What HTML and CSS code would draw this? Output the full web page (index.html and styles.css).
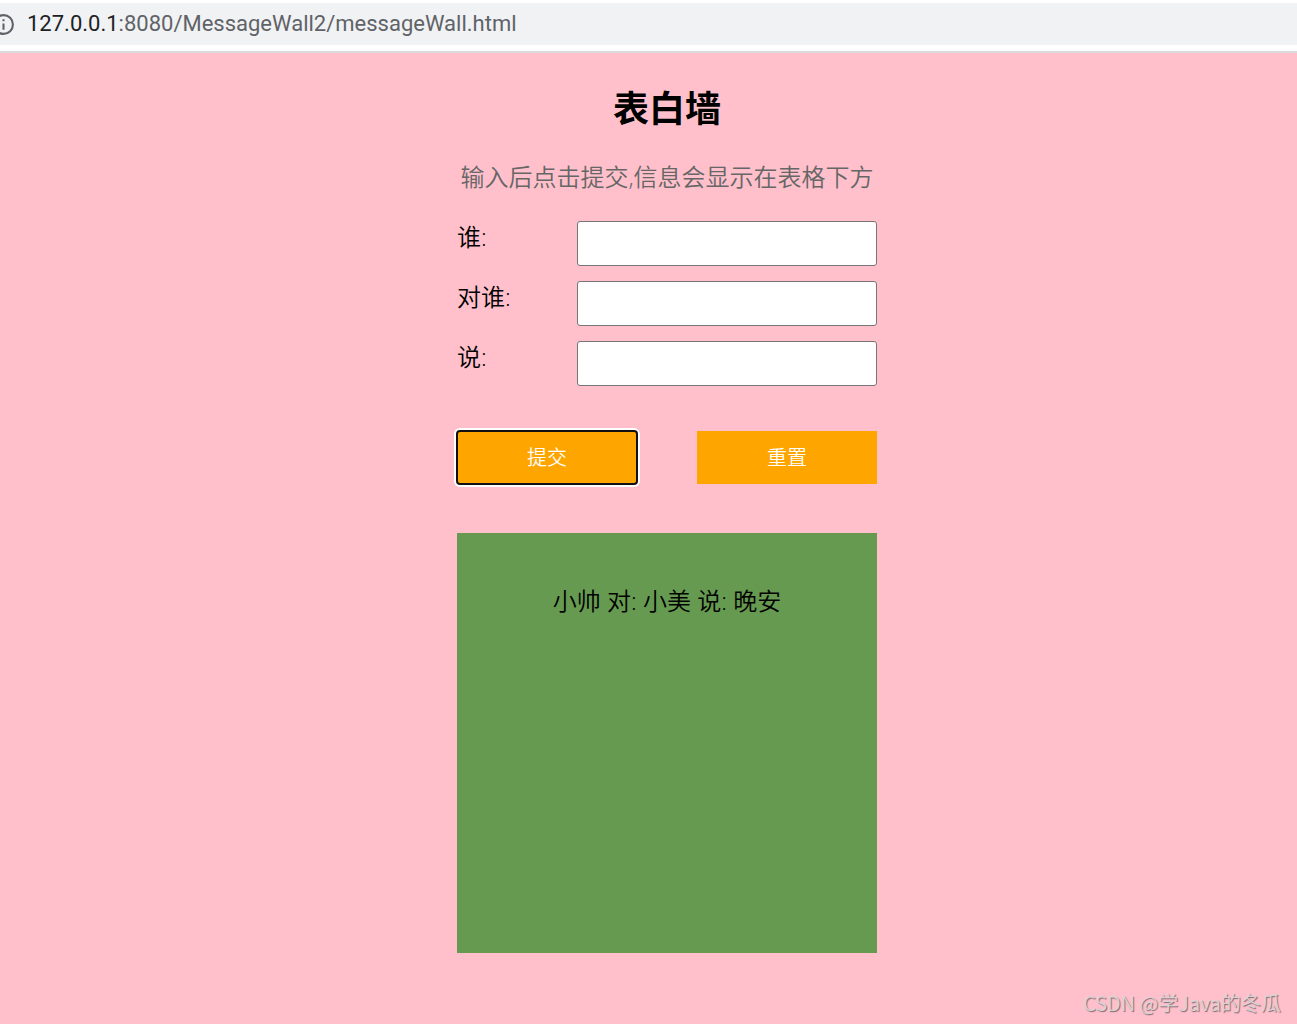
FILE: index.html
```html
<!DOCTYPE html>
<html lang="zh-CN">
<head>
  <meta charset="UTF-8">
  <meta name="viewport" content="width=device-width, initial-scale=1">
  <title>表白墙</title>
  <link rel="stylesheet" href="styles.css">
</head>
<body>
  <header class="browser-bar">
    <div class="address">
      <svg class="info-icon" viewBox="0 0 22 22" aria-hidden="true">
        <circle cx="11" cy="11" r="9" fill="none" stroke="#5f6368" stroke-width="2"/>
        <path d="M11 10v6M11 6v2" stroke="#5f6368" stroke-width="2"/>
      </svg>
      <span class="url"><span class="host">127.0.0.1</span>:8080/MessageWall2/messageWall.html</span>
    </div>
  </header>
  <main class="page">
    <div class="container">
      <h1 class="title">表白墙</h1>
      <p class="hint">输入后点击提交,信息会显示在表格下方</p>
      <form class="form">
        <div class="row">
          <label for="from">谁:</label>
          <input class="field" type="text" id="from">
        </div>
        <div class="row">
          <label for="to">对谁:</label>
          <input class="field" type="text" id="to">
        </div>
        <div class="row">
          <label for="message">说:</label>
          <input class="field" type="text" id="message">
        </div>
        <div class="actions">
          <button class="button button-focused" type="button">提交</button>
          <button class="button" type="reset">重置</button>
        </div>
      </form>
      <section class="wall">
        <p class="message">小帅 对: 小美 说: 晚安</p>
      </section>
    </div>
  </main>
  <footer class="watermark">CSDN @学Java的冬瓜</footer>
</body>
</html>
```
FILE: styles.css
```css
* {
  box-sizing: border-box;
  margin: 0;
  padding: 0;
}

body {
  display: flex;
  flex-direction: column;
  min-height: 100vh;
  background: pink;
  color: #000;
  font: 350 24px/32px "Open Sans", "Noto Sans CJK SC", sans-serif;
}

.browser-bar {
  padding: 3px 0 6px;
  background: #fff;
  border-bottom: 2px solid #dadada;
}

.address {
  display: flex;
  align-items: center;
  gap: 12px;
  height: 42px;
  margin-left: -8px;
  background: #f1f2f4;
  color: #5f6368;
  font: 400 22px/32px Roboto, sans-serif;
}

.info-icon {
  flex: none;
  width: 23px;
  height: 23px;
}

.host {
  color: #202124;
}

.page {
  flex: 1;
  padding: 32px 0 0 37px;
}

.container {
  width: 420px;
  max-width: 100%;
  margin: 0 auto;
}

.title {
  font-size: 36px;
  line-height: 48px;
  text-align: center;
}

.hint {
  margin-top: 28px;
  color: #666;
  text-align: center;
}

.form {
  margin-top: 28px;
}

.row {
  display: grid;
  grid-template-columns: 120px 1fr;
  margin-bottom: 15px;
}

.field {
  width: 100%;
  height: 45px;
  padding: 0 8px;
  border: 1px solid #767676;
  border-radius: 3px;
  background: #fff;
  font: inherit;
}

.actions {
  display: flex;
  justify-content: space-between;
  margin-top: 45px;
}

.button {
  width: 180px;
  height: 53px;
  border: none;
  background: orange;
  color: #fff;
  font: inherit;
  font-size: 20px;
}

.button-focused {
  border-radius: 3px;
  outline: 2px solid #101010;
  outline-offset: -1px;
  box-shadow: 0 0 0 3px #fff;
}

.wall {
  min-height: 420px;
  margin-top: 49px;
  padding-top: 52px;
  background: #669a50;
}

.message {
  text-align: center;
}

.watermark {
  padding: 0 16px 5px;
  color: #d9d2d5;
  font: 350 20px/32px "Noto Sans CJK SC", sans-serif;
  text-align: right;
  text-shadow: 1px 1px 1px #80686e;
}
```
